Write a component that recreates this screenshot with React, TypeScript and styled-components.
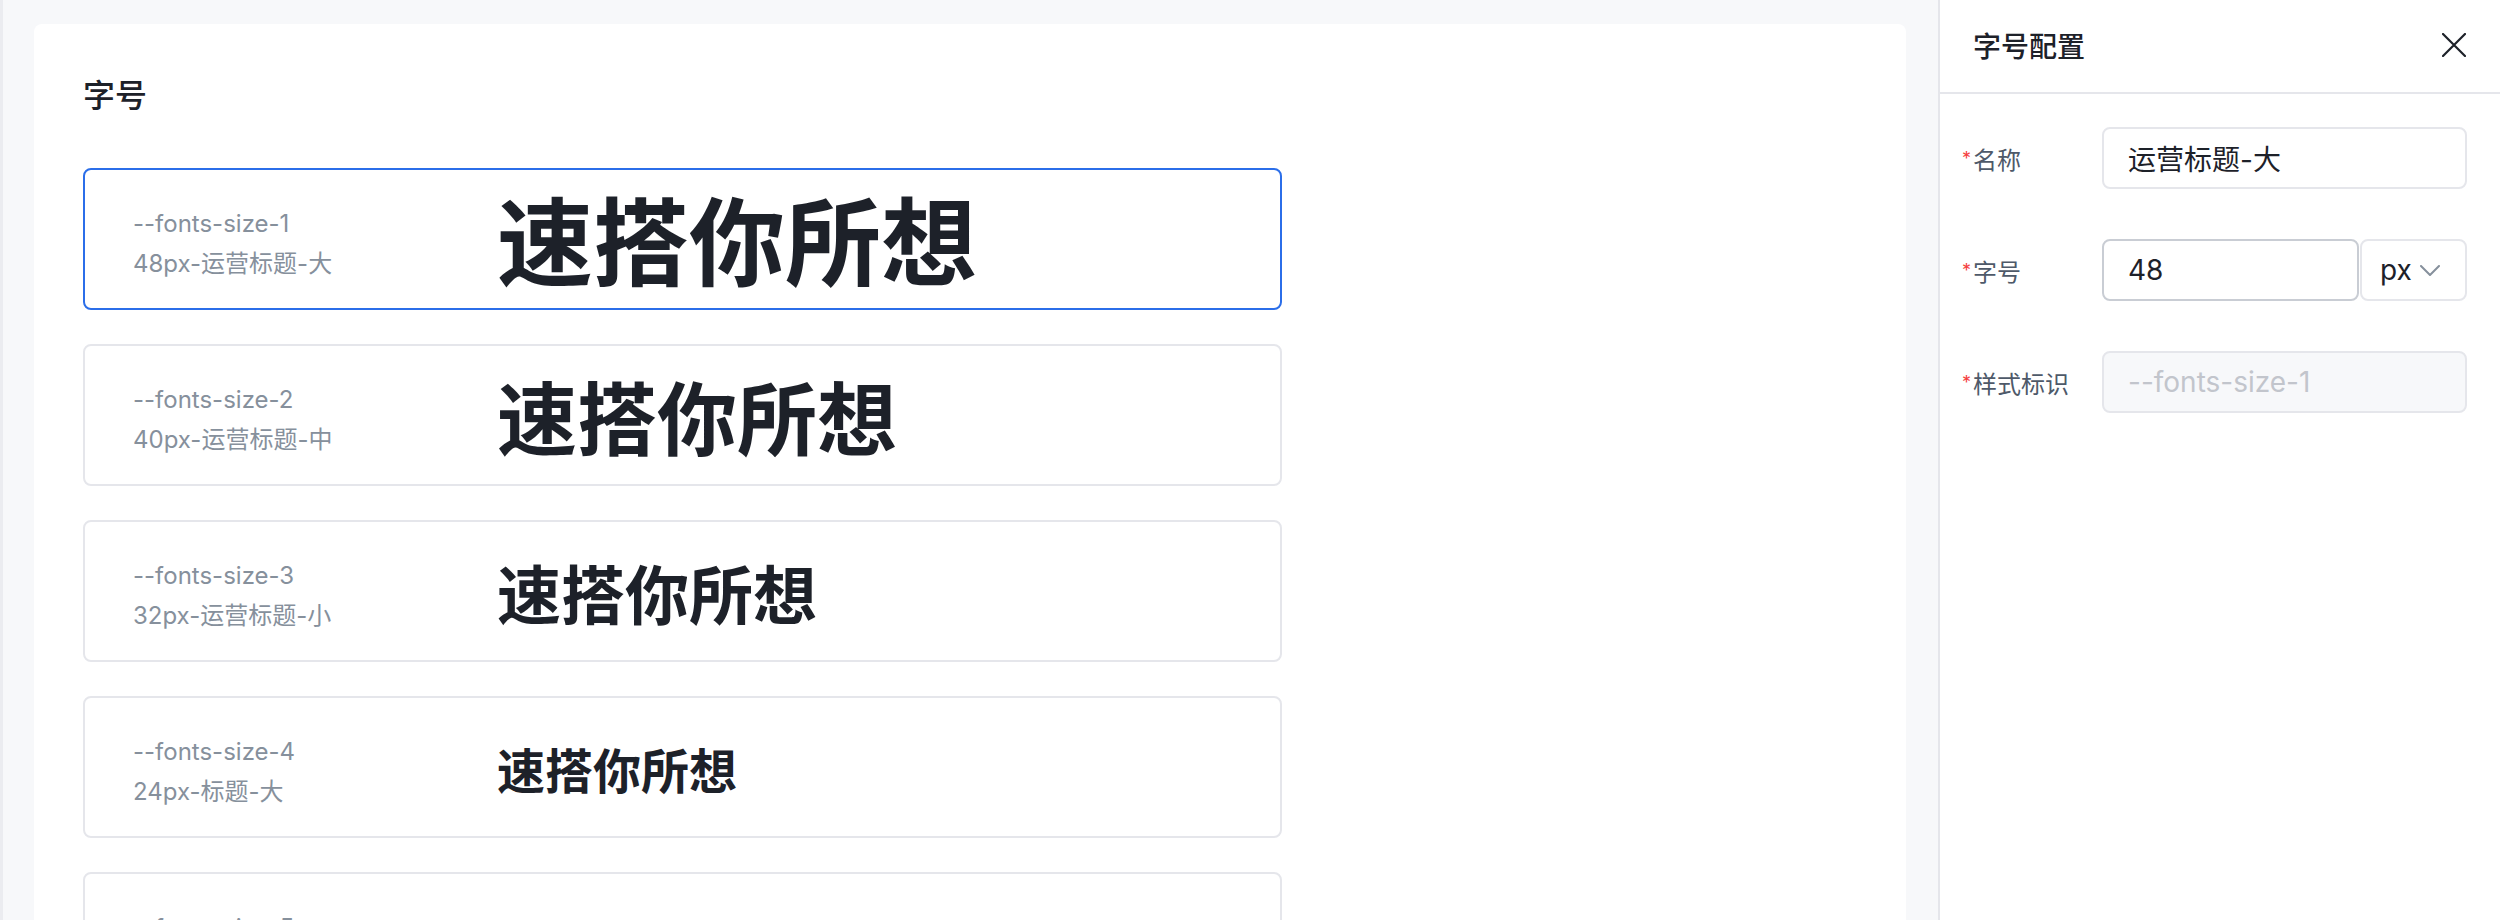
import styled, { createGlobalStyle } from "styled-components";

const GlobalStyle = createGlobalStyle`
    html, body {
        margin: 0;
        padding: 0;
        background: #f7f8fa;
    }
    * {
        box-sizing: border-box;
    }
    body {
        font-family: Inter, "Noto Sans CJK SC", sans-serif;
        color: #1d2129;
    }
`;

const fontSizes = [
    { token: "--fonts-size-1", desc: "48px-运营标题-大", size: 96 },
    { token: "--fonts-size-2", desc: "40px-运营标题-中", size: 80 },
    { token: "--fonts-size-3", desc: "32px-运营标题-小", size: 64 },
    { token: "--fonts-size-4", desc: "24px-标题-大", size: 48 },
    { token: "--fonts-size-5", desc: "20px-标题-中", size: 40 }
];

const Page = styled.div`
    display: flex;
    width: 2506px;
    height: 920px;
    overflow: hidden;
`;

const Workspace = styled.div`
    flex: 1;
    display: flex;
    padding: 24px 32px 0 31px;
    border-left: 3px solid #ebecf0;
    background: #f7f8fa;
`;

const Panel = styled.div`
    flex: 1;
    padding: 48px 49px 0;
    background: #ffffff;
    border-radius: 8px 8px 0 0;
`;

const PanelTitle = styled.div`
    font-size: 32px;
    line-height: 48px;
    font-weight: 500;
    margin-bottom: 48px;
`;

const CardList = styled.div`
    display: flex;
    flex-direction: column;
    gap: 34px;
    width: 1199px;
`;

const SizeCard = styled.div<{ active?: boolean }>`
    display: flex;
    align-items: center;
    flex-shrink: 0;
    height: 142px;
    padding: 10px 48px 0;
    border: 2px solid ${props => (props.active ? "#2b6ee9" : "#e5e6eb")};
    border-radius: 8px;
    background: #ffffff;
`;

const MetaColumn = styled.div`
    display: flex;
    flex-direction: column;
    width: 364px;
    flex-shrink: 0;
    font-size: 24px;
    line-height: 40px;
    color: #86909c;
`;

const SampleText = styled.div<{ size: number }>`
    font-size: ${props => props.size}px;
    line-height: 1.2;
    font-weight: 700;
    color: #1d2129;
    white-space: nowrap;
`;

const Drawer = styled.div`
    width: 568px;
    flex-shrink: 0;
    display: flex;
    flex-direction: column;
    padding-right: 6px;
    background: #ffffff;
    border-left: 2px solid #e5e6eb;
`;

const DrawerHeader = styled.div`
    display: flex;
    align-items: center;
    justify-content: space-between;
    height: 94px;
    padding: 0 34px 2px 33px;
    border-bottom: 2px solid #e5e6eb;
`;

const DrawerTitle = styled.div`
    font-size: 28px;
    font-weight: 500;
    color: #1d2129;
`;

const CloseButton = styled.div`
    display: flex;
    width: 24px;
    height: 24px;
    cursor: pointer;
`;

const FormBody = styled.div`
    display: flex;
    flex-direction: column;
    gap: 50px;
    padding: 33px 33px 0 22px;
`;

const FormRow = styled.div`
    display: flex;
    align-items: center;
    height: 62px;
`;

const Label = styled.div`
    display: flex;
    align-items: center;
    width: 140px;
    flex-shrink: 0;
    font-size: 24px;
    color: #4e5969;
`;

const Required = styled.span`
    color: #f53f3f;
    font-size: 18px;
    margin-right: 2px;
`;

const Field = styled.div<{ tone?: "default" | "hover" | "disabled" }>`
    flex: 1;
    display: flex;
    align-items: center;
    height: 62px;
    padding: 0 24px;
    font-size: 28px;
    border-radius: 8px;
    border: 2px solid ${props => (props.tone === "hover" ? "#c9cdd4" : "#e5e6eb")};
    background: ${props => (props.tone === "disabled" ? "#f7f8fa" : "#ffffff")};
    color: ${props => (props.tone === "disabled" ? "#c2c5cc" : "#1d2129")};
`;

const FieldGroup = styled.div`
    flex: 1;
    display: flex;
    gap: 1px;
`;

const UnitSelect = styled.div`
    display: flex;
    align-items: center;
    gap: 8px;
    width: 107px;
    height: 62px;
    padding: 0 18px;
    font-size: 28px;
    border-radius: 8px;
    border: 2px solid #e5e6eb;
    color: #1d2129;
`;

const CloseIcon = () => (
    <svg width="24" height="24" viewBox="0 0 24 24" fill="none">
        <path d="M1 1L23 23M23 1L1 23" stroke="#1d2129" strokeWidth="2.2" strokeLinecap="round" />
    </svg>
);

const ChevronDown = () => (
    <svg width="20" height="11" viewBox="0 0 20 11" fill="none">
        <path d="M1 1L10 10L19 1" stroke="#86909c" strokeWidth="2" strokeLinecap="round" strokeLinejoin="round" />
    </svg>
);

const App = () => {
    return (
        <Page>
            <GlobalStyle />
            <Workspace>
                <Panel>
                    <PanelTitle>字号</PanelTitle>
                    <CardList>
                        {fontSizes.map((item, index) => (
                            <SizeCard key={item.token} active={index === 0}>
                                <MetaColumn>
                                    <span>{item.token}</span>
                                    <span>{item.desc}</span>
                                </MetaColumn>
                                <SampleText size={item.size}>速搭你所想</SampleText>
                            </SizeCard>
                        ))}
                    </CardList>
                </Panel>
            </Workspace>
            <Drawer>
                <DrawerHeader>
                    <DrawerTitle>字号配置</DrawerTitle>
                    <CloseButton>
                        <CloseIcon />
                    </CloseButton>
                </DrawerHeader>
                <FormBody>
                    <FormRow>
                        <Label>
                            <Required>*</Required>名称
                        </Label>
                        <Field>运营标题-大</Field>
                    </FormRow>
                    <FormRow>
                        <Label>
                            <Required>*</Required>字号
                        </Label>
                        <FieldGroup>
                            <Field tone="hover">48</Field>
                            <UnitSelect>
                                px
                                <ChevronDown />
                            </UnitSelect>
                        </FieldGroup>
                    </FormRow>
                    <FormRow>
                        <Label>
                            <Required>*</Required>样式标识
                        </Label>
                        <Field tone="disabled">--fonts-size-1</Field>
                    </FormRow>
                </FormBody>
            </Drawer>
        </Page>
    );
};

export default App;
